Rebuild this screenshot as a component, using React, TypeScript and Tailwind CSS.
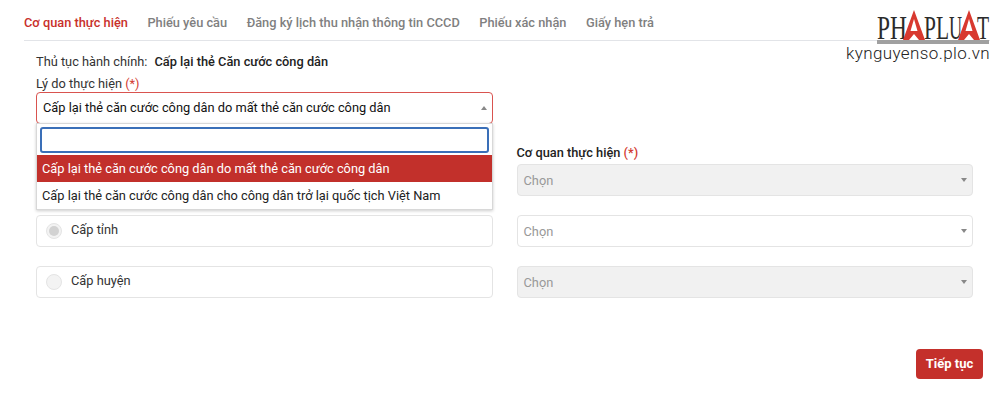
const tabs = ["Cơ quan thực hiện", "Phiếu yêu cầu", "Đăng ký lịch thu nhận thông tin CCCD", "Phiếu xác nhận", "Giấy hẹn trả"];

function Arrow({ up = false }: { up?: boolean }) {
  return (
    <svg width="6" height="4" viewBox="0 0 6 4" className="shrink-0">
      <path d={up ? "M0 4 L3 0 L6 4 Z" : "M0 0 L6 0 L3 4 Z"} fill="#888888" />
    </svg>
  );
}

function Logo() {
  return (
    <svg width="116" height="36" viewBox="0 0 116 36" className="absolute left-[876px] top-[9px]">
      <rect x="1" y="31" width="112" height="4" fill="#a0a0a0" />
      <g fontFamily="'Liberation Serif', serif" fontSize="33" fill="#2b2b2b">
        <text transform="translate(1 30) scale(0.71 1)">PH</text>
        <text transform="translate(48 30) scale(0.65 1)">PL</text>
        <text transform="translate(73 30) scale(0.55 1)">U</text>
        <text transform="translate(101 30) scale(0.6 1)">T</text>
      </g>
      <path d="M38 1 L27 31 L33 31 L38 25 L43 31 L49 31 Z" fill="#d8392f" />
      <path d="M38 10 L34.5 22 L41.5 22 Z" fill="#ffffff" />
      <path d="M93 1 L82 31 L88 31 L93 25 L98 31 L104 31 Z" fill="#d8392f" />
      <path d="M93 10 L89.5 22 L96.5 22 Z" fill="#ffffff" />
    </svg>
  );
}

function ChoiceBox({ label, checked }: { label: string; checked?: boolean }) {
  return (
    <div className="flex h-[32px] items-center gap-[9px] rounded border border-[#e4e4e4] pl-[9px]">
      <span className="flex h-4 w-4 items-center justify-center rounded-full border border-[#e4e4e4] bg-[#f3f3f3]">
        {checked && <span className="h-[10px] w-[10px] rounded-full bg-[#d2d2d2]" />}
      </span>
      <span className="-mt-[3px] text-[12.8px] text-[#333]">{label}</span>
    </div>
  );
}

function SelectBox({ disabled }: { disabled?: boolean }) {
  return (
    <div className={`flex h-[32px] items-center justify-between rounded border border-[#e4e4e4] pl-[6px] pr-[5px] ${disabled ? "bg-[#f1f1f1]" : "bg-white"}`}>
      <span className="pt-[1px] text-[12.8px] text-[#999]">Chọn</span>
      <Arrow />
    </div>
  );
}

export default function App() {
  return (
    <div className="relative h-[406px] w-[1000px] overflow-hidden bg-white font-[Roboto,sans-serif] text-[#222]">
      <div className="ml-6 mr-[10px] flex h-[41px] items-center gap-[19.5px] border-b border-[#e2e4e8] pt-[5px]">
        {tabs.map((t, i) => (
          <span key={t} className={`text-[12.8px] font-medium ${i === 0 ? "text-[#c8302b]" : "text-[#808080]"}`}>
            {t}
          </span>
        ))}
      </div>

      <Logo />
      <div className="absolute right-[10px] top-[42px] text-[17px] font-light leading-[22px] tracking-[0.4px] text-[#222]">
        kynguyenso.plo.vn
      </div>

      <div className="pl-9 pr-[27px]">
        <div className="mt-[11px] flex h-5 items-center gap-[7px] text-[12.8px]">
          <span className="text-[#333]">Thủ tục hành chính:</span>
          <span className="font-medium text-[#222]">Cấp lại thẻ Căn cước công dân</span>
        </div>
        <div className="mt-[2px] h-[18px] text-[12.8px] leading-5 text-[#333]">
          Lý do thực hiện <span className="text-[#d33c33]">(*)</span>
        </div>

        <div className="relative w-[457px]">
          <div className="flex h-[32px] items-center justify-between rounded border border-[#d9534f] pl-[6px] pr-[5px]">
            <span className="text-[12.8px] text-[#111]">Cấp lại thẻ căn cước công dân do mất thẻ căn cước công dân</span>
            <Arrow up />
          </div>
          <div className="absolute left-0 right-0 top-[31px] z-10 border border-[#d8d8d8] bg-white pt-[3px] shadow-[0_1px_3px_rgba(0,0,0,0.2)]">
            <div className="mx-[3px] h-[26px] rounded-[3px] border-2 border-[#3a6fb8]" />
            <div className="mt-[2px] flex h-[27px] items-center bg-[#c2302b] pl-[5px] text-[12.8px] text-white">
              Cấp lại thẻ căn cước công dân do mất thẻ căn cước công dân
            </div>
            <div className="flex h-[27px] items-center pl-[5px] text-[12.8px] text-[#222]">
              Cấp lại thẻ căn cước công dân cho công dân trở lại quốc tịch Việt Nam
            </div>
          </div>
        </div>

        <div className="mt-[19px] grid grid-cols-2 gap-x-6">
          <div />
          <div className="h-5 text-[12.8px] font-medium leading-5">
            Cơ quan thực hiện <span className="text-[#d33c33]">(*)</span>
          </div>
        </div>
        <div className="mt-[1px] grid grid-cols-2 gap-x-6 gap-y-[19px]">
          <div className="h-[32px]" />
          <SelectBox disabled />
          <ChoiceBox label="Cấp tỉnh" checked />
          <SelectBox />
          <ChoiceBox label="Cấp huyện" />
          <SelectBox disabled />
        </div>
      </div>

      <div className="mt-[51px] flex justify-end pr-[17px]">
        <button className="h-[30px] w-[67px] rounded bg-[#c4302b] text-[13px] font-bold text-white">Tiếp tục</button>
      </div>
    </div>
  );
}
